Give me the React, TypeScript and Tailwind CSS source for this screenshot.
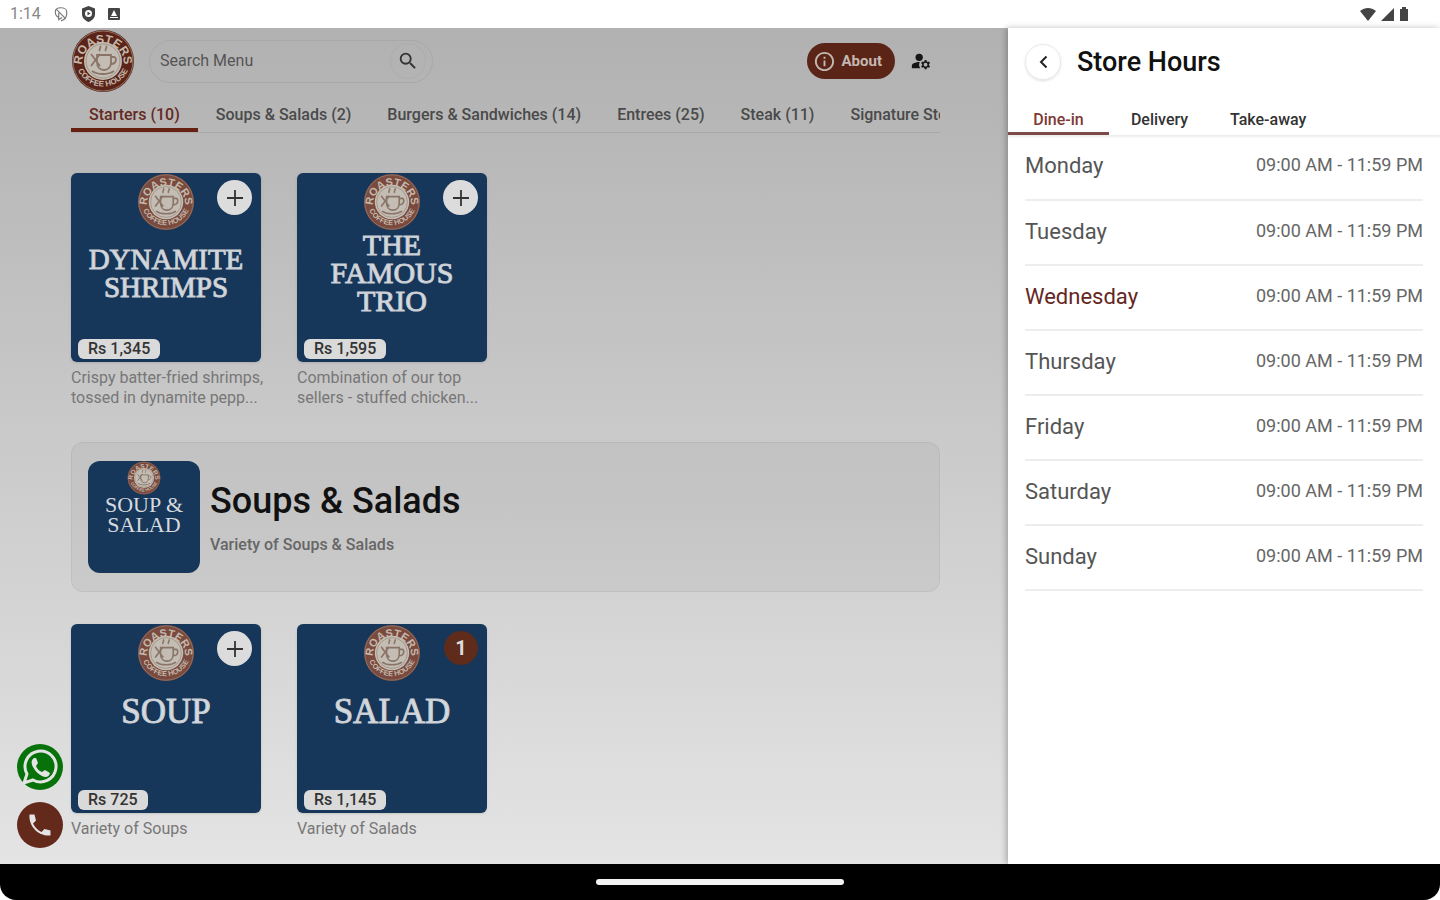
import { useState } from "react";
import { clsx } from "clsx";
import { MdInfoOutline, MdManageAccounts, MdSearch } from "react-icons/md";

type MenuItem = {
  name: string;
  price: string;
  description: string;
  count?: number;
};

const categories = [
  "Starters (10)",
  "Soups & Salads (2)",
  "Burgers & Sandwiches (14)",
  "Entrees (25)",
  "Steak (11)",
  "Signature Steaks (8)",
];

const starters: MenuItem[] = [
  {
    name: "DYNAMITE SHRIMPS",
    price: "Rs 1,345",
    description: "Crispy batter-fried shrimps, tossed in dynamite pepp...",
  },
  {
    name: "THE FAMOUS TRIO",
    price: "Rs 1,595",
    description: "Combination of our top sellers - stuffed chicken...",
  },
];

const soups: MenuItem[] = [
  { name: "SOUP", price: "Rs 725", description: "Variety of Soups" },
  {
    name: "SALAD",
    price: "Rs 1,145",
    description: "Variety of Salads",
    count: 1,
  },
];

const services = ["Dine-in", "Delivery", "Take-away"];

const days = [
  "Monday",
  "Tuesday",
  "Wednesday",
  "Thursday",
  "Friday",
  "Saturday",
  "Sunday",
];

const today = "Wednesday";

const Logo = ({
  className,
  id,
  ring = "#7a4a3f",
}: {
  className?: string;
  id: string;
  ring?: string;
}) => (
  <svg viewBox="0 0 64 64" className={className} aria-hidden="true">
    <defs>
      <path id={`${id}-top`} d="M11 35a21 21 0 1 1 42 0" />
      <path id={`${id}-bottom`} d="M4.500 30a27.500 27.500 0 0 0 55 0" />
    </defs>
    <circle cx="32" cy="32" r="31" fill={ring} />
    <circle cx="32" cy="32" r="30" fill="none" stroke="#8f7566" />
    <circle cx="32" cy="32" r="19" fill="#c3bdb3" />
    <circle cx="32" cy="32" r="17" fill="none" stroke="#a39488" />
    <g
      fill="#c3b9ab"
      fontFamily="Liberation Sans, sans-serif"
      fontWeight="700"
      textAnchor="middle"
    >
      <text fontSize="12">
        <textPath href={`#${id}-top`} startOffset="50%">
          ROASTERS
        </textPath>
      </text>
      <text fontSize="8">
        <textPath href={`#${id}-bottom`} startOffset="50%">
          COFFEE HOUSE
        </textPath>
      </text>
    </g>
    <path
      d="M26 26h14v7c0 5-3 8-7 8s-7-3-7-8zM40 28h3c3 0 3 7-3 7M21 42c6 4 16 4 22 0M20 25l9 12M29 25l-9 12M29 22c-2-2 2-3 0-5M35 22c-2-2 2-3 0-5"
      fill="none"
      stroke="#8a7468"
      strokeWidth="1.800"
    />
  </svg>
);

const StatusBar = () => (
  <div className="flex h-7 items-center justify-between bg-white pr-6 pl-[10px] text-[#444]">
    <div className="flex items-center gap-3">
      <span className="text-base text-[#888]">1:14</span>
      <svg width="16" height="16" viewBox="0 0 14 14" fill="none" stroke="#777">
        <path d="M7 1.500c2 0 5 1 5 3.500v2c0 3-2 5-5 6M7 1.500c-3 0-5 1-5 3.500 0 3 1 4 3 5M3 3l8 8M5 6v6l3-2" />
      </svg>
      <svg width="15" height="16" viewBox="0 0 15 16">
        <path d="M7.500 0 14 2.500V8c0 4-3 6.500-6.500 8C4 14.500 1 12 1 8V2.500z" fill="#444" />
        <circle cx="7.500" cy="7.500" r="3.500" fill="#fff" />
        <path d="m6.500 5.500 3 2-3 2z" fill="#444" />
      </svg>
      <svg width="12" height="12" viewBox="0 0 12 12">
        <rect width="12" height="12" rx="1" fill="#444" />
        <path d="M3 8 6 2l3 6zM2 9h8v1H2z" fill="#fff" />
      </svg>
    </div>
    <div className="flex items-center gap-1">
      <svg width="18" height="14" viewBox="0 0 18 14" fill="#444">
        <path d="M9 14 1 4C6 0 12 0 17 4z" />
      </svg>
      <svg width="13" height="13" viewBox="0 0 13 13" fill="#444">
        <path d="M13 0v13H0z" />
      </svg>
      <svg width="18" height="14" viewBox="0 0 18 14" fill="#444">
        <path d="M4 0h4v2h2v12H2V2h2z" />
      </svg>
    </div>
  </div>
);

const ItemCard = ({ item, id }: { item: MenuItem; id: string }) => (
  <article className="w-[190px]">
    <div className="relative flex h-[189px] flex-col items-center rounded-md bg-[#16365a] shadow">
      <Logo id={id} className="h-[58px] w-[58px] shrink-0" />
      <h3
        className={clsx(
          "flex w-40 flex-col text-center font-['Liberation_Serif',serif] text-[#d6dade] [-webkit-text-stroke:1px_#c9ced4]",
          item.name === "THE FAMOUS TRIO" && "text-[30px] leading-7",
          item.name === "DYNAMITE SHRIMPS" && "pt-[14px] text-[29px] leading-7",
          !item.name.includes(" ") && "pt-[10px] text-[35px] leading-10"
        )}
      >
        {item.name.split(" ").map((word) => (
          <span key={word}>{word}</span>
        ))}
      </h3>
      {item.count ? (
        <button
          aria-label={`${item.count} in cart`}
          className="absolute top-[7px] right-[9px] h-[34px] w-[34px] rounded-full bg-[#5f2b1a] text-xl font-bold text-[#ddd]"
        >
          {item.count}
        </button>
      ) : (
        <button
          aria-label={`Add ${item.name}`}
          className="absolute top-[7px] right-[9px] flex h-[35px] w-[35px] items-center justify-center rounded-full bg-[#dcdcdc]"
        >
          <svg width="16" height="16" viewBox="0 0 16 16" stroke="#333" strokeWidth="1.800">
            <path d="M8 0v16M0 8h16" />
          </svg>
        </button>
      )}
      <span className="absolute bottom-[3px] left-[7px] rounded-md bg-[#dadada] px-[10px] text-base leading-5 font-medium text-[#333]">
        {item.price}
      </span>
    </div>
    <p className="w-[196px] pt-[6px] text-base leading-5 text-[#777]">
      {item.description}
    </p>
  </article>
);

const StoreHours = () => {
  const [service, setService] = useState("Dine-in");

  return (
    <aside className="z-10 w-[30%] shrink-0 bg-white shadow-[-2px_0_6px_rgba(0,0,0,0.25)]">
      <header className="flex items-center gap-4 px-[17px] pt-4 pb-5">
        <button
          aria-label="Back"
          className="flex h-9 w-9 items-center justify-center rounded-full border border-[#e8e8e8] shadow-sm"
        >
          <svg width="9" height="14" viewBox="0 0 9 14" fill="none" stroke="#222" strokeWidth="2">
            <path d="M7.500 1.500 2 7l5.500 5.500" />
          </svg>
        </button>
        <h2 className="text-[27px] leading-9 font-medium text-[#111]">
          Store Hours
        </h2>
      </header>
      <div role="tablist" className="flex h-[35px] shadow-[0_2px_2px_rgba(0,0,0,0.08)]">
        {services.map((name) => (
          <button
            key={name}
            role="tab"
            aria-selected={service === name}
            onClick={() => setService(name)}
            className={clsx(
              "min-w-[101px] border-b-3 px-5 pt-2 text-base font-medium",
              service === name
                ? "border-[#7d4a47] text-[#7d3a35]"
                : "border-transparent text-[#333]"
            )}
          >
            {name}
          </button>
        ))}
      </div>
      <div className="px-[17px]">
        <table className="w-full">
          <tbody>
            {days.map((day) => (
              <tr key={day} className="h-[65px] border-b-2 border-[#ededed] align-top">
                <th
                  scope="row"
                  className={clsx(
                    "pt-[17px] text-left text-[22px] leading-7 font-normal",
                    day === today ? "text-[#64261f]" : "text-[#555]"
                  )}
                >
                  {day}
                </th>
                <td className="pt-4 text-right text-lg leading-7 text-[#666]">
                  09:00 AM - 11:59 PM
                </td>
              </tr>
            ))}
          </tbody>
        </table>
      </div>
    </aside>
  );
};

const Menu = () => (
  <main className="min-w-0 flex-1 bg-linear-to-b from-[#b1b1b1] to-[#e4e4e4] pr-[68px] pl-[71px]">
    <header className="flex items-center pt-px">
      <Logo id="brand" ring="#5c2419" className="h-16 w-16" />
      <label className="ml-[14px] flex h-[43px] w-[284px] items-center justify-between rounded-full border border-[#a8a8a8] pr-[6px] pl-[10px]">
        <input
          type="search"
          aria-label="Search menu"
          placeholder="Search Menu"
          className="min-w-0 flex-1 bg-transparent text-base outline-none placeholder:text-[#555]"
        />
        <span className="flex h-9 w-9 items-center justify-center rounded-full border border-[#adadad]">
          <MdSearch size={22} color="#333" />
        </span>
      </label>
      <button className="ml-auto flex h-9 items-center gap-[6px] rounded-full bg-[#5a2416] pr-[13px] pl-[6px] text-[15px] font-bold text-[#c4b8b3]">
        <MdInfoOutline size={23} />
        About
      </button>
      <button aria-label="Account" className="mr-2 ml-[15px]">
        <MdManageAccounts size={22} color="#161616" />
      </button>
    </header>
    <nav
      role="tablist"
      className="flex h-10 overflow-hidden border-b border-[#a9a9a9] whitespace-nowrap"
    >
      {categories.map((name, index) => (
        <button
          key={name}
          role="tab"
          aria-selected={index === 0}
          className={clsx(
            "shrink-0 border-b-4 px-[18px] pt-2 text-base font-medium",
            index === 0
              ? "border-[#66200f] text-[#66291f]"
              : "border-transparent text-[#4a4a4a]"
          )}
        >
          {name}
        </button>
      ))}
    </nav>
    <section className="flex gap-9 pt-10">
      {starters.map((item, index) => (
        <ItemCard key={item.name} item={item} id={`starter-${index}`} />
      ))}
    </section>
    <section className="mt-[34px] flex gap-[10px] rounded-xl border border-black/5 bg-black/4 py-[18px] pr-4 pl-4">
      <div className="flex h-28 w-28 shrink-0 flex-col items-center rounded-xl bg-[#16365a]">
        <Logo id="category" className="h-[34px] w-[34px]" />
        <span className="text-center font-['Liberation_Serif',serif] text-[22px] leading-5 text-[#d6dade]">
          SOUP &amp;
          <br />
          SALAD
        </span>
      </div>
      <div className="pt-4">
        <h2 className="text-4xl leading-12 font-medium text-[#111]">
          Soups &amp; Salads
        </h2>
        <p className="pt-2 text-base leading-6 font-medium text-[#666]">
          Variety of Soups &amp; Salads
        </p>
      </div>
    </section>
    <section className="flex gap-9 pt-8">
      {soups.map((item, index) => (
        <ItemCard key={item.name} item={item} id={`soup-${index}`} />
      ))}
    </section>
  </main>
);

const App = () => {
  return (
    <div className="flex min-h-screen flex-col bg-white font-[Roboto,sans-serif]">
      <StatusBar />
      <div className="relative flex flex-1">
        <Menu />
        <StoreHours />
        <div className="absolute bottom-4 left-[17px] flex flex-col gap-3">
          <a href="#whatsapp" aria-label="WhatsApp">
            <svg width="46" height="46" viewBox="0 0 46 46">
              <circle cx="23" cy="23" r="23" fill="#08720a" />
              <path
                d="M7 39 10 30a15.500 15.500 0 1 1 6 6z"
                fill="#08720a"
                stroke="#e4e4e4"
                strokeWidth="3"
              />
              <path
                d="M17 14c-3 2-3 5-1 9s5 7 9 9 7 1 8-3l-5-3-3 2c-3-1-5-3-6-6l2-3-2-5z"
                fill="#e4e4e4"
              />
            </svg>
          </a>
          <a href="#call" aria-label="Call">
            <svg width="46" height="46" viewBox="0 0 46 46">
              <circle cx="23" cy="23" r="23" fill="#63291b" />
              <path
                d="M12.500 12.500h5l1.500 6-3 3c2 4 4.500 6.500 8.500 8.500l3-3 6 1.500v5c-12 1-22-9-21-21z"
                fill="#e4e4e4"
              />
            </svg>
          </a>
        </div>
      </div>
      <footer className="flex h-9 items-center justify-center rounded-b-2xl bg-black">
        <span className="h-[6px] w-[248px] rounded-full bg-[#f2f2f2]" />
      </footer>
    </div>
  );
};

export default App;
